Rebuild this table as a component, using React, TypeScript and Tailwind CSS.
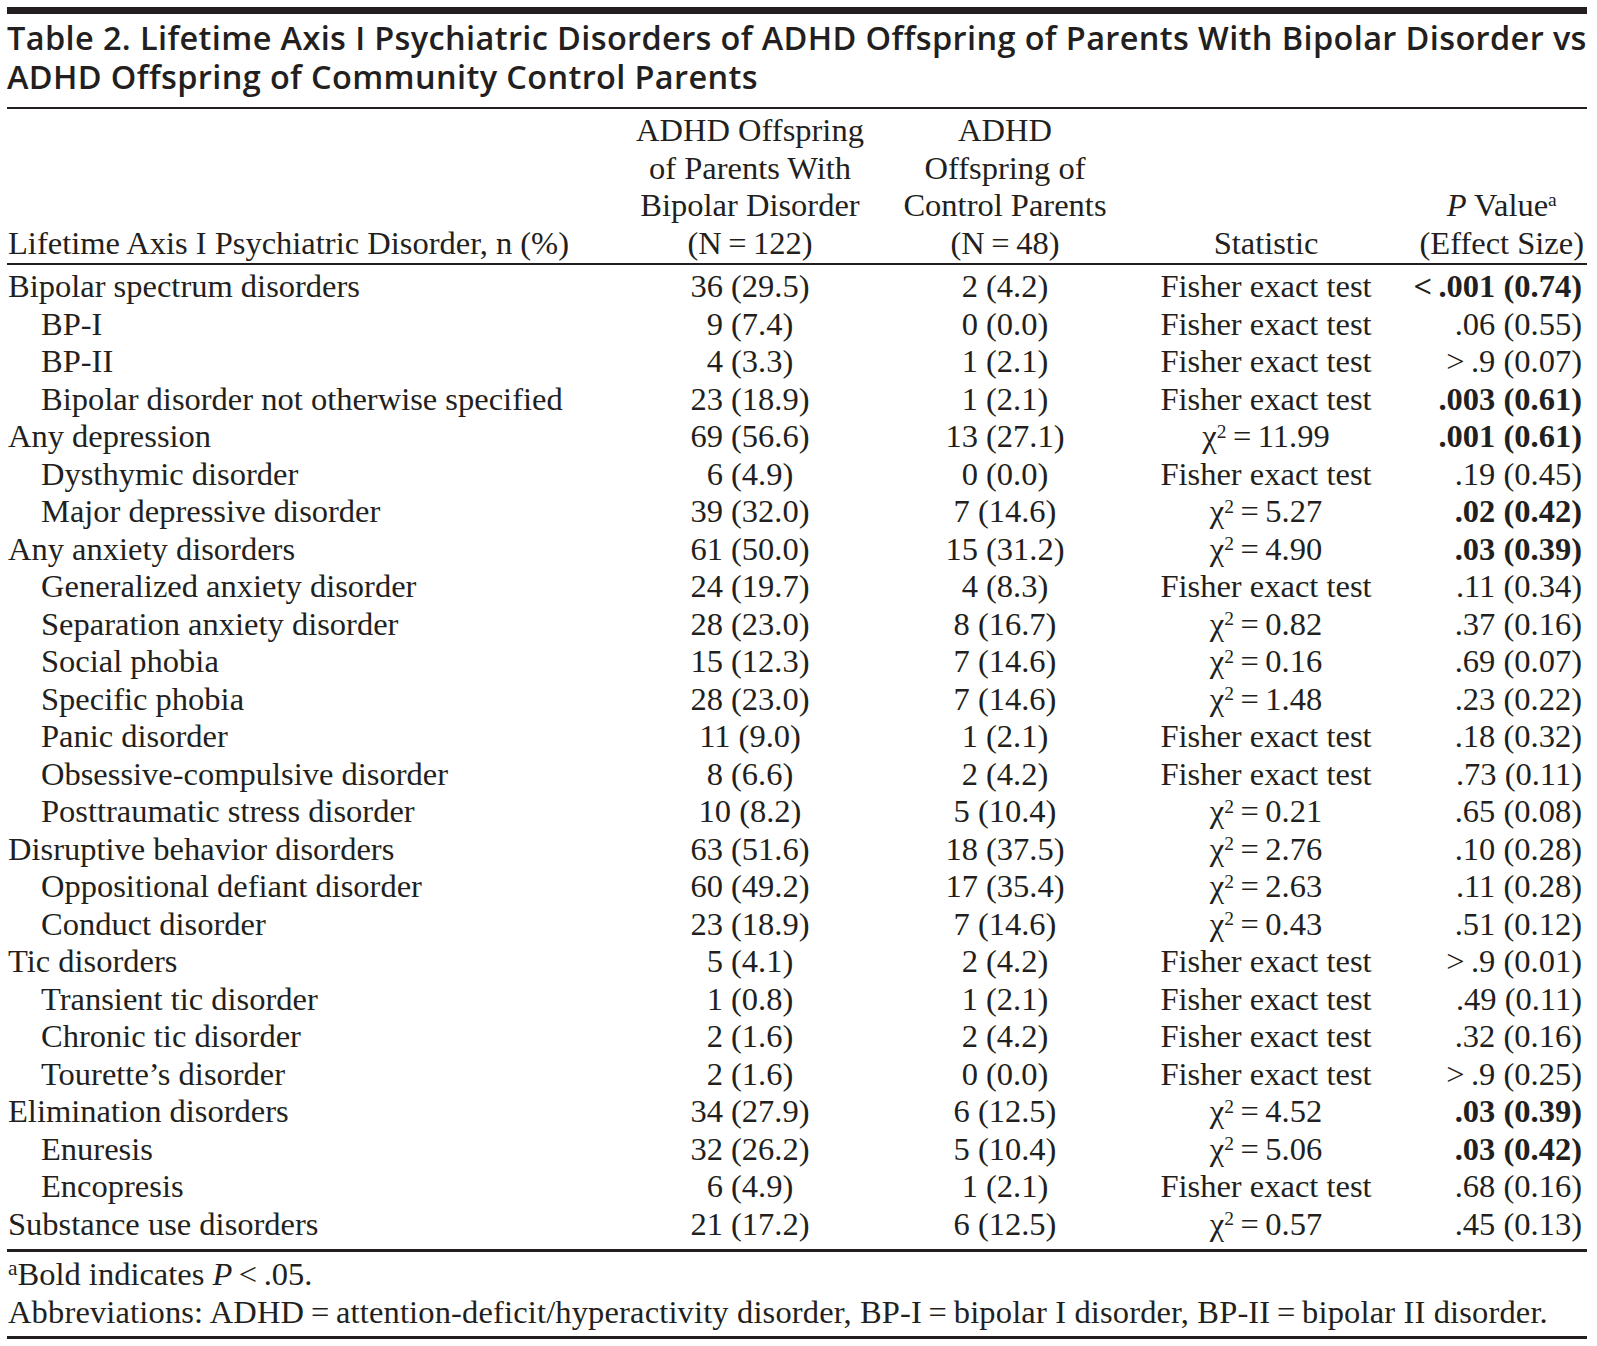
import React from "react";

type Row = {
  label: string;
  sub?: boolean;
  a: string;
  b: string;
  stat: string; // "F" = Fisher exact test, otherwise chi-square value
  p: string;
  bold?: boolean;
};

const rows: Row[] = [
  { label: "Bipolar spectrum disorders", a: "36 (29.5)", b: "2 (4.2)", stat: "F", p: "<\u2009.001 (0.74)", bold: true },
  { label: "BP-I", sub: true, a: "9 (7.4)", b: "0 (0.0)", stat: "F", p: ".06 (0.55)" },
  { label: "BP-II", sub: true, a: "4 (3.3)", b: "1 (2.1)", stat: "F", p: ">\u2009.9 (0.07)" },
  { label: "Bipolar disorder not otherwise specified", sub: true, a: "23 (18.9)", b: "1 (2.1)", stat: "F", p: ".003 (0.61)", bold: true },
  { label: "Any depression", a: "69 (56.6)", b: "13 (27.1)", stat: "11.99", p: ".001 (0.61)", bold: true },
  { label: "Dysthymic disorder", sub: true, a: "6 (4.9)", b: "0 (0.0)", stat: "F", p: ".19 (0.45)" },
  { label: "Major depressive disorder", sub: true, a: "39 (32.0)", b: "7 (14.6)", stat: "5.27", p: ".02 (0.42)", bold: true },
  { label: "Any anxiety disorders", a: "61 (50.0)", b: "15 (31.2)", stat: "4.90", p: ".03 (0.39)", bold: true },
  { label: "Generalized anxiety disorder", sub: true, a: "24 (19.7)", b: "4 (8.3)", stat: "F", p: ".11 (0.34)" },
  { label: "Separation anxiety disorder", sub: true, a: "28 (23.0)", b: "8 (16.7)", stat: "0.82", p: ".37 (0.16)" },
  { label: "Social phobia", sub: true, a: "15 (12.3)", b: "7 (14.6)", stat: "0.16", p: ".69 (0.07)" },
  { label: "Specific phobia", sub: true, a: "28 (23.0)", b: "7 (14.6)", stat: "1.48", p: ".23 (0.22)" },
  { label: "Panic disorder", sub: true, a: "11 (9.0)", b: "1 (2.1)", stat: "F", p: ".18 (0.32)" },
  { label: "Obsessive-compulsive disorder", sub: true, a: "8 (6.6)", b: "2 (4.2)", stat: "F", p: ".73 (0.11)" },
  { label: "Posttraumatic stress disorder", sub: true, a: "10 (8.2)", b: "5 (10.4)", stat: "0.21", p: ".65 (0.08)" },
  { label: "Disruptive behavior disorders", a: "63 (51.6)", b: "18 (37.5)", stat: "2.76", p: ".10 (0.28)" },
  { label: "Oppositional defiant disorder", sub: true, a: "60 (49.2)", b: "17 (35.4)", stat: "2.63", p: ".11 (0.28)" },
  { label: "Conduct disorder", sub: true, a: "23 (18.9)", b: "7 (14.6)", stat: "0.43", p: ".51 (0.12)" },
  { label: "Tic disorders", a: "5 (4.1)", b: "2 (4.2)", stat: "F", p: ">\u2009.9 (0.01)" },
  { label: "Transient tic disorder", sub: true, a: "1 (0.8)", b: "1 (2.1)", stat: "F", p: ".49 (0.11)" },
  { label: "Chronic tic disorder", sub: true, a: "2 (1.6)", b: "2 (4.2)", stat: "F", p: ".32 (0.16)" },
  { label: "Tourette\u2019s disorder", sub: true, a: "2 (1.6)", b: "0 (0.0)", stat: "F", p: ">\u2009.9 (0.25)" },
  { label: "Elimination disorders", a: "34 (27.9)", b: "6 (12.5)", stat: "4.52", p: ".03 (0.39)", bold: true },
  { label: "Enuresis", sub: true, a: "32 (26.2)", b: "5 (10.4)", stat: "5.06", p: ".03 (0.42)", bold: true },
  { label: "Encopresis", sub: true, a: "6 (4.9)", b: "1 (2.1)", stat: "F", p: ".68 (0.16)" },
  { label: "Substance use disorders", a: "21 (17.2)", b: "6 (12.5)", stat: "0.57", p: ".45 (0.13)" },
];

const cols = "grid grid-cols-[618px_250px_260px_262px_190px]";

const Stat: React.FC<{ value: string }> = ({ value }) =>
  value === "F" ? (
    <>Fisher exact test</>
  ) : (
    <>
      χ<sup className="text-[0.6em]">2</sup>
      {"\u2009=\u2009" + value}
    </>
  );

export default function App() {
  return (
    <div
      className="w-[1597px] bg-white pt-[7px] pl-[7px] text-[#231f20]"
      style={{ fontFamily: '"Liberation Serif", "Times New Roman", serif' }}
    >
      <div className="w-[1580px]">
        <div className="h-[7px] bg-[#231f20]" />

        <h1
          className="mt-[4px] text-[32.5px] leading-[39px] font-semibold tracking-[0.37px] whitespace-nowrap"
          style={{ fontFamily: '"Open Sans", Roboto, sans-serif' }}
        >
          <div className="h-[39px]">
            Table 2. Lifetime Axis I Psychiatric Disorders of ADHD Offspring of Parents With Bipolar Disorder vs
          </div>
          <div className="h-[39px]">ADHD Offspring of Community Control Parents</div>
        </h1>

        <div className="mt-[11px] h-[2px] bg-[#231f20]" />

        <div className={`${cols} pt-[3px] pb-px text-[32.5px] leading-[37.6px]`}>
          <div className="flex items-end pl-px">Lifetime Axis I Psychiatric Disorder, n (%)</div>
          <div className="flex items-end justify-center text-center">
            ADHD Offspring
            <br />
            of Parents With
            <br />
            Bipolar Disorder
            <br />
            (N{"\u2009=\u2009"}122)
          </div>
          <div className="flex items-end justify-center text-center">
            ADHD
            <br />
            Offspring of
            <br />
            Control Parents
            <br />
            (N{"\u2009=\u2009"}48)
          </div>
          <div className="flex items-end justify-center">Statistic</div>
          <div className="flex items-end justify-end pr-[3px]">
            <div className="text-center">
              <i>P</i> Value<sup className="text-[0.6em]">a</sup>
              <br />
              (Effect Size)
            </div>
          </div>
        </div>

        <div className="h-[2px] bg-[#231f20]" />

        <div className="pt-[3px] pb-[6px] text-[32.5px] leading-[37.5px]">
          {rows.map((r) => (
            <div key={r.label} className={`${cols} h-[37.5px]`}>
              <div className={r.sub ? "pl-[34px]" : "pl-px"}>{r.label}</div>
              <div className="text-center">{r.a}</div>
              <div className="text-center">{r.b}</div>
              <div className="text-center">
                <Stat value={r.stat} />
              </div>
              <div className={`pr-[5px] text-right ${r.bold ? "font-bold" : ""}`}>{r.p}</div>
            </div>
          ))}
        </div>

        <div className="h-[3px] bg-[#231f20]" />

        <div className="pt-[3px] pl-px text-[32.5px] leading-[38px]">
          <p>
            <sup className="text-[0.66em]">a</sup>Bold indicates <i>P</i>
            {"\u2009<\u2009"}.05.
          </p>
          <p className="tracking-[0.15px]">
            Abbreviations: ADHD{"\u2009=\u2009"}attention-deficit/hyperactivity disorder, BP-I{"\u2009=\u2009"}bipolar I
            disorder, BP-II{"\u2009=\u2009"}bipolar II disorder.
          </p>
        </div>

        <div className="mt-[5px] h-[3px] bg-[#231f20]" />
      </div>
    </div>
  );
}
